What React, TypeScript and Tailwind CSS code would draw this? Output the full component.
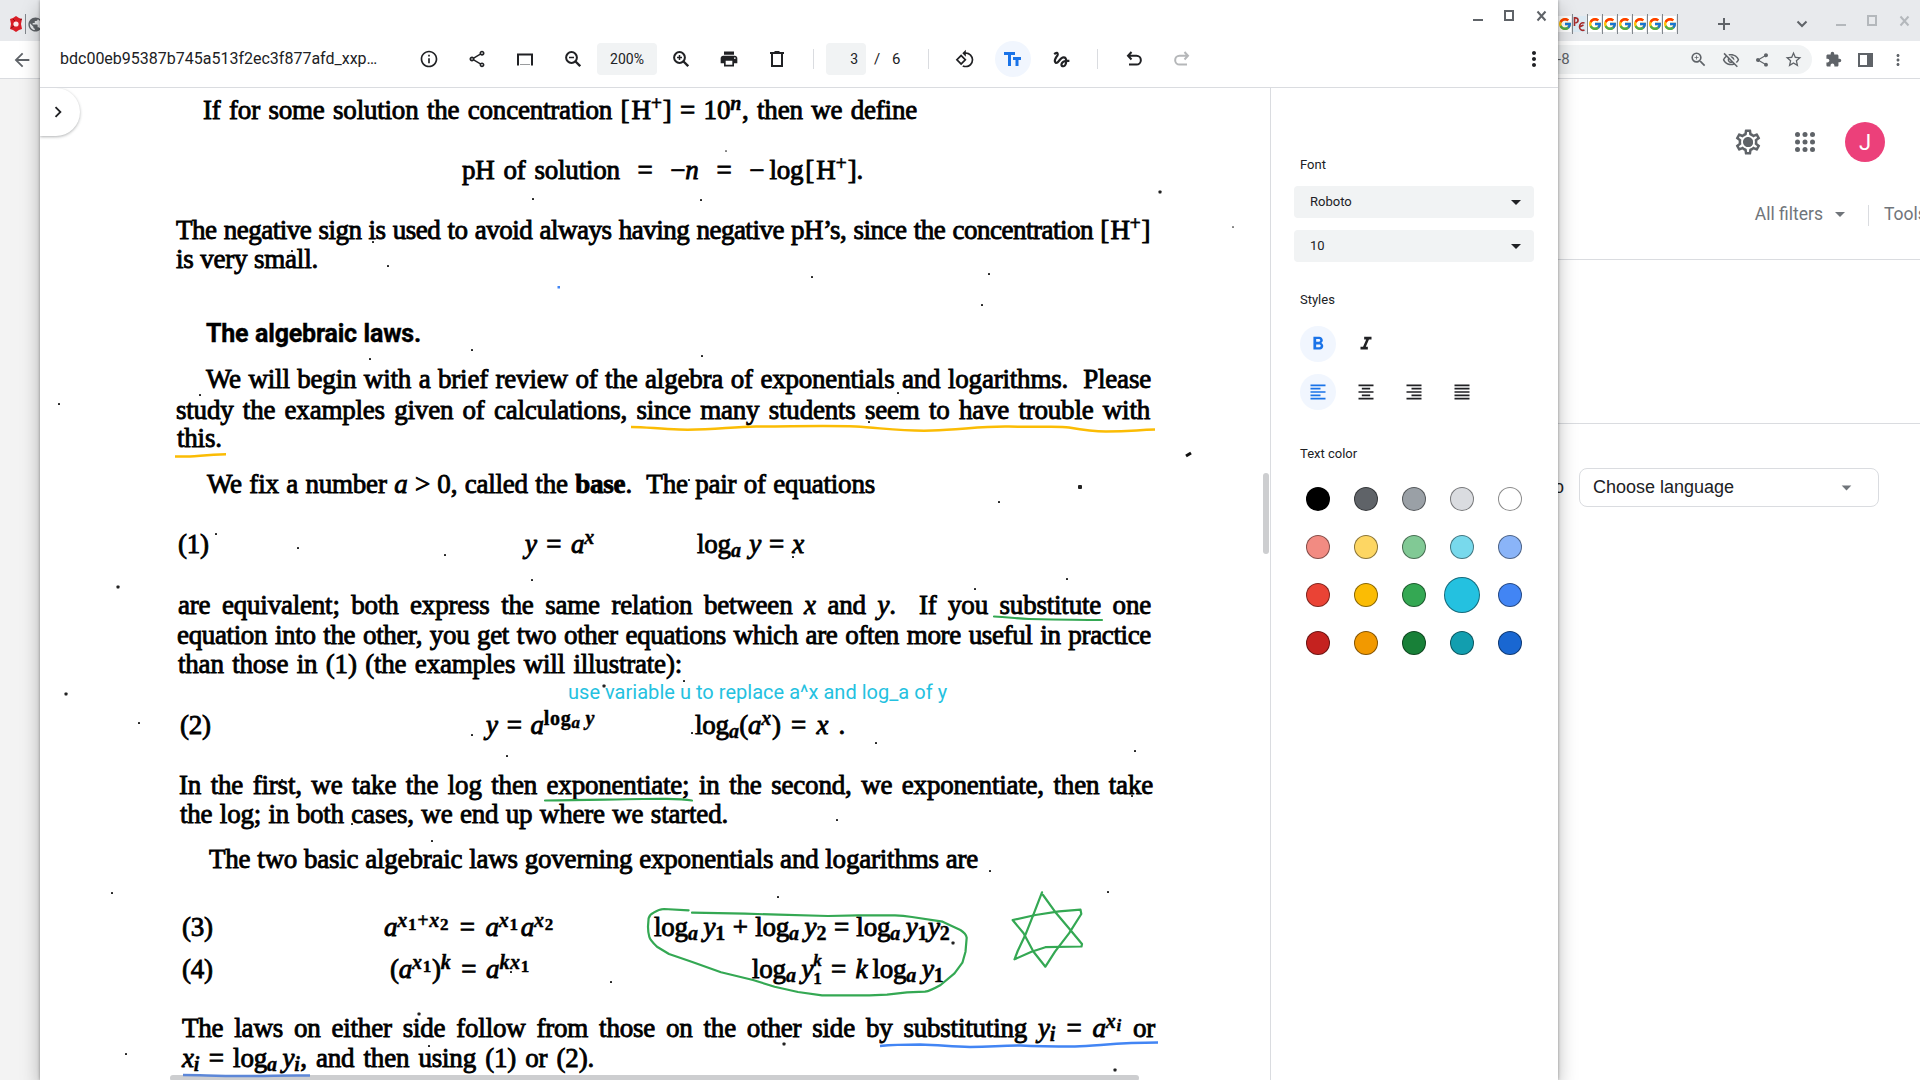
import React from "react";
import {
  MdArrowBack, MdChevronRight, MdOutlineInfo, MdOutlineShare, MdShare, MdZoomIn, MdPrint,
  MdOutlineRotate90DegreesCcw, MdGesture, MdMoreVert, MdArrowDropDown, MdFormatBold,
  MdFormatItalic, MdFormatAlignLeft, MdFormatAlignCenter, MdFormatAlignRight, MdFormatAlignJustify,
  MdOutlineVisibilityOff, MdStarOutline, MdExtension, MdOutlineSettings, MdPublic,
} from "react-icons/md";
import { FcGoogle } from "react-icons/fc";

type Kids = { children?: React.ReactNode };

/* ---------- browser window in the background ---------- */

function WindowControls({ className }: { className: string }) {
  return (
    <svg width="76" height="16" viewBox="0 0 76 16" fill="none" stroke="currentColor" strokeWidth="2" className={className}>
      <path d="M1 12h10" />
      <rect x="33" y="3" width="8" height="9" />
      <path d="M65.5 3.500l8 9m0-9l-8 9" />
    </svg>
  );
}

function TabSeparator() {
  return <i className="h-5 w-px shrink-0 bg-[#80868b]" />;
}

function Browser() {
  return (
    <div className="flex h-[1080px] w-[1920px] flex-col bg-white text-[#5f6368]">
      <div className="flex h-[41px] shrink-0 items-start justify-between bg-[#e8eaed]">
        <div className="mt-[14px] flex items-center gap-[2px] pl-[9px]">
          <svg width="14" height="18" viewBox="0 0 14 18">
            <path d="M7 1l3 2 3 1-1 5 1 5-3 1-3 2-3-2-3-1 1-5-1-5 3-1z" fill="#d91e26" />
            <circle cx="7" cy="9" r="2.600" fill="#fbe9e9" />
            <path d="M2 13l3-2M11 5l2-1M4 4l2 2" stroke="#8d0d12" />
          </svg>
          <TabSeparator />
          <MdPublic size={17} className="-ml-px" />
        </div>
        <div className="flex">
          <div className="mt-[14px] flex h-5 items-center">
            {["g", "p", "g", "g", "g", "g", "g", "g"].map((k, i) => (
              <div key={i} className="flex w-[15px] items-center justify-between">
                {k === "g" ? (
                  <span className="flex h-4 w-[13px] items-center justify-center bg-white"><FcGoogle size={12} viewBox="4 4 40 40" /></span>
                ) : (
                  <svg width="13" height="16" viewBox="0 0 12 16" fill="none" stroke="#a52a2a" strokeWidth="1.600" className="bg-[#dbe9f2]">
                    <path d="M1 1v9M1 2c4-1 5 4 1 5M11 7c-3-1-5 1-5 4s3 4 5 3M6 11l4-2" />
                  </svg>
                )}
                <TabSeparator />
              </div>
            ))}
          </div>
          <svg width="14" height="14" viewBox="0 0 14 14" stroke="currentColor" strokeWidth="2" className="mt-[17px] ml-[39px]">
            <path d="M7 1v12M1 7h12" />
          </svg>
          <svg width="12" height="10" viewBox="0 0 12 10" fill="none" stroke="currentColor" strokeWidth="2" className="mt-[19px] ml-[65px]">
            <path d="M1.500 2.500L6 7l4.500-4.500" />
          </svg>
          <WindowControls className="mt-[13px] mr-[9px] ml-[27px] text-[#b4b8bc]" />
        </div>
      </div>
      <div className="flex h-[38px] shrink-0 items-center border-b border-[#dadce0]">
        <MdArrowBack size={22} className="ml-[11px] shrink-0" />
        <div className="ml-[19px] flex h-[29px] w-[1760px] shrink-0 items-center justify-end rounded-full bg-[#f1f3f4] pr-[9px]">
          <span className="mr-auto pl-[1505px] font-[Roboto] text-[15px]">-8</span>
          <div className="flex items-center gap-[14px]">
            <MdZoomIn size={19} />
            <MdOutlineVisibilityOff size={18} />
            <MdShare size={16} />
            <MdStarOutline size={19} />
          </div>
        </div>
        <div className="ml-[13px] flex items-center gap-[16px]">
          <MdExtension size={17} />
          <svg width="15" height="14" viewBox="0 0 15 14">
            <path d="M0 0h15v14H0zM2 2v10h7V2z" fill="currentColor" fillRule="evenodd" />
          </svg>
          <MdMoreVert size={18} />
        </div>
      </div>
      <div className="flex flex-1">
        <div className="w-10 bg-[#f3f3f3]" />
        <div className="flex flex-1 flex-col">
          <div className="flex h-[126px] items-center justify-end pr-[35px]">
            <span className="relative flex size-[30px] items-center justify-center">
              <MdOutlineSettings size={30} />
              <i className="absolute size-[9px] rounded-full bg-[#5f6368]" />
            </span>
            <svg width="20" height="20" viewBox="0 0 20 20" fill="currentColor" className="mr-[30px] ml-[32px]">
              {[2.5, 10, 17.5].map((y) => [2.5, 10, 17.5].map((x) => <circle key={`${x}-${y}`} cx={x} cy={y} r="2.500" />))}
            </svg>
            <span className="flex size-10 items-center justify-center rounded-full bg-[#ec407a] font-[Roboto] text-[22px] text-white">J</span>
          </div>
          <div className="flex h-[55px] items-center justify-end overflow-hidden border-b border-[#dadce0] pb-[36px] font-[Roboto] text-[17.500px] whitespace-nowrap text-[#70757a]">
            <span>All filters</span>
            <MdArrowDropDown size={24} className="mr-[16px] ml-[5px]" />
            <i className="h-6 w-px shrink-0 bg-[#dadce0]" />
            <span className="ml-[15px] w-[36px]">Tools</span>
          </div>
          <div className="h-[164px] border-b border-[#dadce0]" />
          <div className="mt-[44px] flex items-center justify-end pr-[41px] font-['Liberation_Sans'] text-[18px] text-[#202124]">
            <span className="mr-[15px]">to</span>
            <div className="flex h-[39px] w-[300px] items-center justify-between rounded-lg border border-[#dadce0] pr-[20px] pl-[13px]">
              Choose language
              <MdArrowDropDown size={23} className="text-[#70757a]" />
            </div>
          </div>
        </div>
      </div>
    </div>
  );
}

/* ---------- viewer toolbar ---------- */

function ToolButton({ children, active }: Kids & { active?: boolean }) {
  return (
    <button className={active ? "flex size-9 shrink-0 items-center justify-center rounded-full bg-[#f1f6fe] text-[#1a73e8]" : "flex size-9 shrink-0 items-center justify-center"}>
      {children}
    </button>
  );
}

function Divider() {
  return <i className="h-5 w-px shrink-0 bg-[#dadce0]" />;
}

function Magnifier({ plus }: { plus?: boolean }) {
  return (
    <svg width="16" height="16" viewBox="0 0 16 16" fill="none" stroke="currentColor" strokeWidth="2">
      <circle cx="6.500" cy="6.500" r="5.400" />
      <path d="M10.300 10.300l4.900 4.900" strokeWidth="2.300" />
      <path d={plus ? "M4 6.500h5M6.500 4v5" : "M4 6.500h5"} strokeWidth="1.500" />
    </svg>
  );
}

function Toolbar() {
  return (
    <header className="h-[88px] shrink-0 border-b border-[#dadce0]">
      <div className="flex h-[30px] justify-end pt-2 pr-[10px]">
        <WindowControls className="text-[#5f6368]" />
      </div>
      <div className="flex h-[58px] items-center font-[Roboto] text-[#202124]">
        <span className="ml-5 w-[351px] shrink-0 text-[16px] whitespace-nowrap">bdc00eb95387b745a513f2ec3f877afd_xxp…</span>
        <div className="flex items-center gap-3">
          <ToolButton><MdOutlineInfo size={20} /></ToolButton>
          <ToolButton><MdOutlineShare size={20} /></ToolButton>
          <ToolButton>
            <svg width="16" height="13" viewBox="0 0 16 13" fill="none"><path d="M3 11.500h10" stroke="#9a9c9e" /><path d="M1 12.500V1.500h14v11" stroke="currentColor" strokeWidth="2" /></svg>
          </ToolButton>
          <ToolButton><Magnifier /></ToolButton>
        </div>
        <span className="ml-[6px] flex h-8 w-[60px] items-center justify-center rounded bg-[#f1f3f4] text-sm">200%</span>
        <div className="ml-[6px] flex items-center gap-3">
          <ToolButton><Magnifier plus /></ToolButton>
          <ToolButton><MdPrint size={20} /></ToolButton>
          <ToolButton>
            <svg width="14" height="16" viewBox="0 0 14 16" fill="none" stroke="currentColor" strokeWidth="2"><path d="M0 2h14M4.500 1h5M2 2v13h10V2" /></svg>
          </ToolButton>
        </div>
        <div className="ml-[18px] flex items-center">
          <Divider />
          <span className="ml-3 flex h-8 w-10 items-center justify-end rounded bg-[#f1f3f4] pr-2 text-sm">3</span>
          <span className="ml-2 w-[18px] text-[15px]">/</span>
          <span className="w-[36px] text-[15px]">6</span>
          <Divider />
        </div>
        <div className="ml-[18px] flex items-center gap-3">
          <ToolButton><MdOutlineRotate90DegreesCcw size={20} /></ToolButton>
          <ToolButton active>
            <svg width="18" height="14" viewBox="0 0 18 14" fill="currentColor"><path d="M0 0h11v3H7v11H4V3H0zM9 5h8v3h-2.500v6h-3V8H9z" /></svg>
          </ToolButton>
          <ToolButton><MdGesture size={21} /></ToolButton>
        </div>
        <div className="ml-[18px] flex items-center">
          <Divider />
        </div>
        <div className="ml-[18px] flex items-center gap-3">
          <ToolButton>
            <svg width="16" height="16" viewBox="0 0 16 16" fill="none" stroke="currentColor" strokeWidth="2"><path d="M5.500 1L2 4.800 5.500 8.500M2 4.800h8.500a4.200 4.200 0 010 8.700H3" /></svg>
          </ToolButton>
          <ToolButton>
            <svg width="16" height="16" viewBox="0 0 16 16" fill="none" stroke="#b5b7b9" strokeWidth="2"><path d="M10.500 1L14 4.800l-3.500 3.700M14 4.800H5.500a4.200 4.200 0 000 8.700H13" /></svg>
          </ToolButton>
        </div>
        <MdMoreVert size={24} className="mr-3 ml-auto" />
      </div>
    </header>
  );
}

/* ---------- document page ---------- */

function Row({ className = "", children }: Kids & { className?: string }) {
  return <p className={`flex h-[29px] leading-[29px] whitespace-nowrap ${className}`}>{children}</p>;
}

function Fill({ className = "", children }: Kids & { className?: string }) {
  return <span className={`block h-[29px] shrink-0 whitespace-nowrap [text-align-last:justify] ${className}`}>{children}</span>;
}

const Sup = ({ children }: Kids) => <sup className="top-[-0.45em] text-[20px] font-bold tracking-[0.7px] [-webkit-text-stroke:0.4px]">{children}</sup>;
const Sub = ({ children }: Kids) => <sub className="bottom-[-0.2em] text-[20px] font-bold tracking-[0.3px] [-webkit-text-stroke:0.4px]">{children}</sub>;
const Tiny = ({ children }: Kids) => <span className="relative top-[3px] text-[17px] not-italic">{children}</span>;
const H = () => <>[&#8202;H<Sup>+</Sup>]</>;
const LogA = () => <>log<Sub><i>a</i></Sub></>;

const specks: [number, number, number][] = [
  [533, 199, 2], [701, 200, 2], [726, 151, 1.5], [1160, 192, 3], [373, 242, 2], [292, 251, 2], [388, 266, 2], [812, 277, 2], [989, 274, 2],
  [982, 305, 2], [1233, 227, 1.5], [472, 350, 2], [370, 359, 2], [702, 356, 2], [200, 395, 2], [898, 393, 2], [869, 422, 2], [59, 404, 2], [1080, 487, 4],
  [999, 502, 2], [216, 534, 2], [298, 548, 2], [445, 555, 2], [793, 557, 2], [532, 580, 2], [118, 587, 3], [1067, 579, 2], [975, 589, 2],
  [66, 694, 3], [139, 723, 2], [604, 686, 3], [684, 681, 2], [472, 735, 2], [692, 733, 2], [507, 756, 2], [876, 743, 2], [1135, 751, 2], [282, 780, 2],
  [352, 824, 2], [837, 820, 2], [432, 841, 2], [990, 871, 2], [778, 897, 2], [1108, 892, 2], [112, 893, 2], [953, 943, 3], [511, 972, 2], [611, 982, 2],
  [419, 1014, 3], [429, 1046, 2], [784, 1044, 3], [1115, 1070, 3], [126, 1054, 2], [1132, 796, 2], [829, 106, 1.5], [689, 480, 2],
];

function Annotations() {
  return (
    <svg className="pointer-events-none absolute inset-0" width="1230" height="992" viewBox="40 88 1230 992" fill="none">
      {specks.map(([x, y, s], i) => <rect key={i} x={x - s / 2} y={y - s / 2} width={s} height={s} rx={s / 4} fill="#222" />)}
      <path d="M1186 456l5-3" stroke="#111" strokeWidth="3" />
      <rect x="557.500" y="286" width="2.500" height="2.500" fill="#4285f4" />
      <g stroke="#fbbc04" strokeWidth="2.500" strokeLinejoin="round">
        <path d="M631 427c15 0 28 2 48 2.500 30 1 50-2.500 77-3 35 0 70-1 100 0 30 2 50 5 76 4 30-1 50-4.500 77-4 35 1 50-.5 60 1 17 3 25 4 37 4 25 0 30-1.500 49-2" />
        <path d="M175 456.500h15c10-.5 18-2 36-2.200" />
      </g>
      <g stroke="#34a853" strokeWidth="2.200" strokeLinejoin="round" strokeLinecap="round">
        <path d="M994 616.500c15 .5 20 2 35 2.500 25 .5 50 1 73 1" />
        <path d="M545 800.500c40 0 60-1 98-1.500 30 0 36-1 49 1.500" />
        <path d="M692 912.700L745 913.700 778.600 914.700 828 916 858 915.300H895Q903 915.500 912 917L942.600 921.700 960.400 930Q966 933.500 966.700 937.700L965.500 951.700 962.400 962.700 954.500 973.300 940.600 985Q930 991 925 991.700L907 992.300 887 994.700 869.500 995.300H822L798 992 774.600 986.700 753 980 721 972.300 691.600 961.700 669 954 657 946.700Q650 940 649.300 936.700 648 932 648 926.700L648.600 918.300Q650 914 653.600 912.700 659 909 664 909L688.600 910.300" />
        <path d="M1042 892.300L1033.500 914.300 1025.600 934.300 1017.700 951 1014.500 959.300 1031.500 951.700 1045.400 947.200 1081.500 946.500 1082 944 1071 930.700 1055 911.700 1043 895" />
        <path d="M1012.600 920L1035.500 915 1059 911.300 1080.500 909.700 1081.300 914 1069 933.300 1055 951.700 1045.400 966.700 1033.500 951.700 1023.600 933.300z" />
      </g>
      <path d="M880 1046c15-1.500 25-1.500 40-1.500 20 .5 30 2 50 2.500 25-.5 30-1.500 50-1.500 20 1 40 1 55 1 25-1 45-4 83-4" stroke="#4285f4" strokeWidth="2.500" />
    </svg>
  );
}

function Page() {
  return (
    <main className="relative h-[992px] w-[1230px] shrink-0 overflow-hidden bg-white pt-[8px] font-['Liberation_Serif',serif] text-[27px] tracking-[-0.2px] text-black [-webkit-text-stroke:0.85px_#000]">
      <Row className="pl-[163px]"><Fill className="w-[714px]">If for some solution the concentration <H /> = 10<Sup><i>n</i></Sup>, then we define</Fill></Row>
      <Row className="mt-[31px] pl-[422px]"><Fill className="w-[401px]">pH of solution &nbsp;=&nbsp; −<i>n</i> &nbsp;=&nbsp; −&#8201;log&#8202;<H />.</Fill></Row>
      <Row className="mt-[31px] pl-[136px] tracking-[-0.5px]"><Fill className="w-[974px]">The negative sign is used to avoid always having negative pH’s, since the concentration <H /></Fill></Row>
      <Row className="pl-[136px]"><Fill className="w-[142px]">is very small.</Fill></Row>
      <Row className="mt-[45px] pl-[166px] font-[Roboto] text-[25px] font-bold [-webkit-text-stroke:0.4px]"><Fill className="w-[215px]">The algebraic laws.</Fill></Row>
      <Row className="mt-[17px] pl-[166px]"><Fill className="w-[945px]">We will begin with a brief review of the algebra of exponentials and logarithms.&nbsp; Please</Fill></Row>
      <Row className="mt-[2px] pl-[136px]"><Fill className="w-[974px]">study the examples given of calculations, since many students seem to have trouble with</Fill></Row>
      <Row className="-mt-px pl-[137px]"><Fill className="w-[46px]">this.</Fill></Row>
      <Row className="mt-[17px] pl-[167px]"><Fill className="w-[668px]">We fix a number <i>a</i> &gt; 0, called the <b>base</b>.&nbsp; The pair of equations</Fill></Row>
      <Row className="mt-[31px] pl-[138px]">
        <Fill className="w-[347px] [text-align-last:left]">(1)</Fill>
        <Fill className="w-[70px]"><i>y</i> = <i>a</i><Sup><i>x</i></Sup></Fill>
        <Fill className="ml-[102px] w-[107px]"><LogA /> <i>y</i> = <i>x</i></Fill>
      </Row>
      <Row className="mt-[32px] pl-[138px]"><Fill className="w-[973px]">are equivalent; both express the same relation between <i>x</i> and <i>y</i>.&nbsp; If you substitute one</Fill></Row>
      <Row className="mt-px pl-[137px] tracking-[-0.35px]"><Fill className="w-[974px]">equation into the other, you get two other equations which are often more useful in practice</Fill></Row>
      <Row className="pl-[138px]"><Fill className="w-[504px]">than those in (1) (the examples will illustrate):</Fill></Row>
      <Row className="mt-[32px] pl-[140px]">
        <Fill className="w-[306px] [text-align-last:left]">(2)</Fill>
        <Fill className="w-[109px]"><i>y</i> = <i>a</i><Sup>log<Tiny><i>a</i></Tiny>&#8201;<i>y</i></Sup></Fill>
        <Fill className="ml-[100px] w-[150px]"><LogA />(<i>a</i><Sup><i>x</i></Sup>) = <i>x</i> .</Fill>
      </Row>
      <Row className="mt-[31px] pl-[139px]"><Fill className="w-[974px]">In the first, we take the log then exponentiate; in the second, we exponentiate, then take</Fill></Row>
      <Row className="pl-[140px]"><Fill className="w-[548px]">the log; in both cases, we end up where we started.</Fill></Row>
      <Row className="mt-[16px] pl-[169px]"><Fill className="w-[769px]">The two basic algebraic laws governing exponentials and logarithms are</Fill></Row>
      <Row className="mt-[39px] pl-[142px]">
        <Fill className="w-[202px] [text-align-last:left]">(3)</Fill>
        <Fill className="w-[170px]"><i>a</i><Sup><i>x</i><Tiny>1</Tiny>+<i>x</i><Tiny>2</Tiny></Sup> = <i>a</i><Sup><i>x</i><Tiny>1</Tiny></Sup>&#8202;<i>a</i><Sup><i>x</i><Tiny>2</Tiny></Sup></Fill>
        <Fill className="ml-[100px] w-[296px]"><LogA />&#8201;<i>y</i><Sub>1</Sub> + <LogA />&#8201;<i>y</i><Sub>2</Sub> = <LogA />&#8201;<i>y</i><Sub>1</Sub><i>y</i><Sub>2</Sub></Fill>
      </Row>
      <Row className="mt-[13px] pl-[142px]">
        <Fill className="w-[208px] [text-align-last:left]">(4)</Fill>
        <Fill className="w-[140px]">(<i>a</i><Sup><i>x</i><Tiny>1</Tiny></Sup>)<Sup><i>k</i></Sup> = <i>a</i><Sup><i>kx</i><Tiny>1</Tiny></Sup></Fill>
        <Fill className="ml-[222px] w-[192px]">
          <LogA />&#8201;<i>y</i>
          <span className="inline-flex h-[29px] flex-col items-center justify-center align-top text-[17px] leading-[18px] font-bold [-webkit-text-stroke:0.4px]">
            <i>k</i>
            <span>1</span>
          </span>{" "}
          = <i>k</i>&#8201;<LogA />&#8201;<i>y</i><Sub>1</Sub>
        </Fill>
      </Row>
      <Row className="mt-[30px] pl-[142px]"><Fill className="w-[973px]">The laws on either side follow from those on the other side by substituting <i>y<Sub>i</Sub></i> = <i>a</i><Sup><i>x</i><Tiny><i>i</i></Tiny></Sup> or</Fill></Row>
      <Row className="mt-px pl-[142px]"><Fill className="w-[412px]"><i>x<Sub>i</Sub></i> = <LogA />&#8201;<i>y<Sub>i</Sub></i>, and then using (1) or (2).</Fill></Row>
      <Annotations />
      <span className="absolute top-[592px] left-[528px] font-[Roboto] text-[20px] leading-[24px] tracking-[0.03px] whitespace-nowrap text-[#24c1e0] [-webkit-text-stroke:0]">use variable u to replace a^x and log_a of y</span>
      <div className="absolute top-[987px] left-[130px] h-[6px] w-[969px] rounded-full bg-[#cdced0]" />
      <svg className="absolute top-[984px] left-[140px]" width="132" height="6" viewBox="0 0 132 6"><path d="M3 3c20 0 30 1 60 1s40-1 67-.5" stroke="#5c87d8" strokeWidth="2.500" fill="none" /></svg>
      <div className="absolute top-[385px] right-px h-[81px] w-[6px] rounded-full bg-[#cdced0]" />
      <button className="absolute top-0 left-0 flex h-12 w-10 items-center justify-center rounded-r-full bg-white pr-[5px] text-[#202124] shadow-[0_1px_3px_rgba(60,64,67,0.4)] [-webkit-text-stroke:0]">
        <MdChevronRight size={22} />
      </button>
    </main>
  );
}

/* ---------- text tool side panel ---------- */

function Select({ children }: Kids) {
  return (
    <div className="flex h-8 w-[240px] items-center justify-between rounded bg-[#f1f3f4] pr-[6px] pl-4">
      {children}
      <MdArrowDropDown size={24} />
    </div>
  );
}

const swatches = [
  "bg-black", "bg-[#5f6368]", "bg-[#9aa0a6]", "bg-[#dadce0]", "bg-white",
  "bg-[#f28b82]", "bg-[#fdd663]", "bg-[#81c995]", "bg-[#78d9ec]", "bg-[#8ab4f8]",
  "bg-[#ea4335]", "bg-[#fbbc04]", "bg-[#34a853]", "bg-[#24c1e0]", "bg-[#4285f4]",
  "bg-[#c5221f]", "bg-[#f29900]", "bg-[#188038]", "bg-[#129eaf]", "bg-[#1967d2]",
];

function SidePanel() {
  return (
    <aside className="flex w-[288px] shrink-0 flex-col border-l border-[#dadce0] bg-white pl-[23px] font-[Roboto] text-[13px] leading-5 text-[#202124]">
      <h2 className="mt-[67px] ml-[6px]">Font</h2>
      <div className="mt-[11px] flex flex-col gap-3">
        <Select>Roboto</Select>
        <Select>10</Select>
      </div>
      <h2 className="mt-[28px] ml-[6px]">Styles</h2>
      <div className="mt-[16px] ml-[6px] flex gap-3">
        <ToolButton active><MdFormatBold size={22} /></ToolButton>
        <ToolButton><MdFormatItalic size={22} /></ToolButton>
      </div>
      <div className="mt-3 ml-[6px] flex gap-3">
        <ToolButton active><MdFormatAlignLeft size={20} /></ToolButton>
        <ToolButton><MdFormatAlignCenter size={20} /></ToolButton>
        <ToolButton><MdFormatAlignRight size={20} /></ToolButton>
        <ToolButton><MdFormatAlignJustify size={20} /></ToolButton>
      </div>
      <h2 className="mt-[34px] ml-[6px]">Text color</h2>
      <div className="mt-[17px] ml-[6px] grid w-[228px] grid-cols-5 gap-3">
        {swatches.map((c) => (
          <div key={c} className="flex size-9 items-center justify-center">
            <i className={`rounded-full border border-black/45 ${c} ${c === "bg-[#24c1e0]" ? "size-9" : "size-6"}`} />
          </div>
        ))}
      </div>
    </aside>
  );
}

export default function App() {
  return (
    <div className="relative h-[1080px] w-[1920px] overflow-hidden">
      <Browser />
      <div className="absolute top-0 left-10 flex h-[1080px] w-[1518px] flex-col bg-white shadow-[0_0_3px_rgba(0,0,0,0.35),0_8px_18px_rgba(0,0,0,0.28)]">
        <Toolbar />
        <div className="flex min-h-0 flex-1">
          <Page />
          <SidePanel />
        </div>
      </div>
    </div>
  );
}
